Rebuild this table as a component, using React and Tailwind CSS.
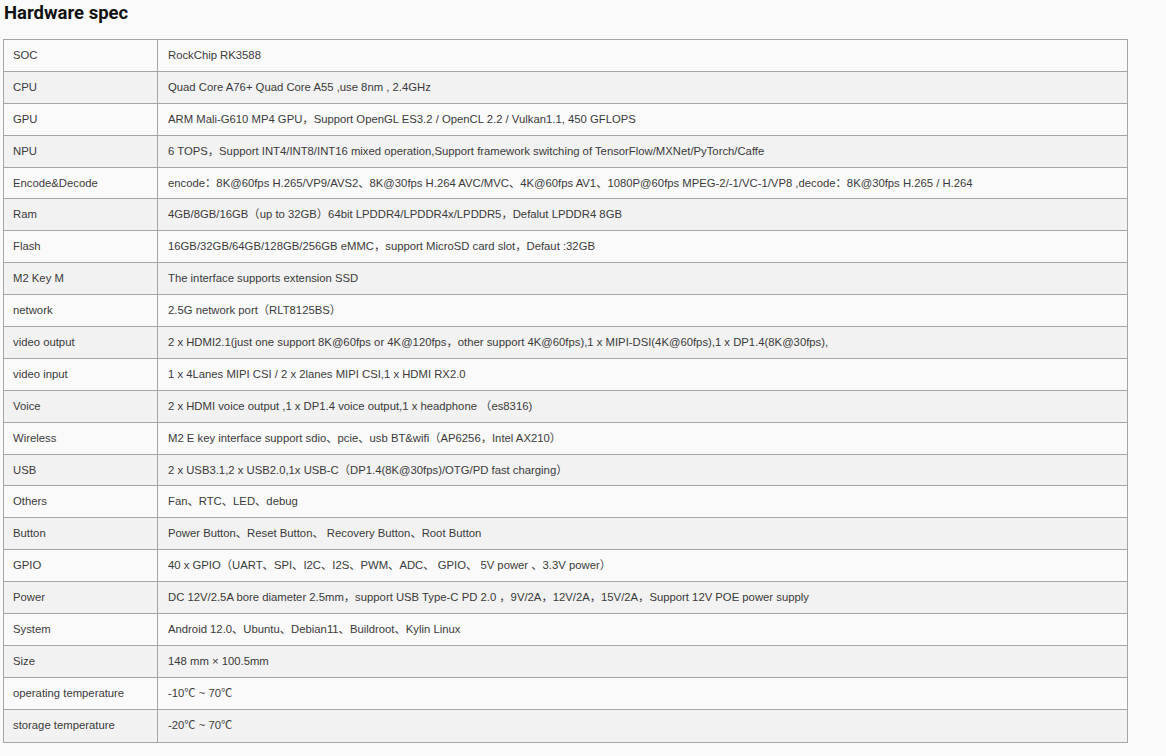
const rows = [
  ["SOC", "RockChip RK3588"],
  ["CPU", "Quad Core A76+ Quad Core A55 ,use 8nm , 2.4GHz"],
  ["GPU", "ARM Mali-G610 MP4 GPU，Support OpenGL ES3.2 / OpenCL 2.2 / Vulkan1.1, 450 GFLOPS"],
  ["NPU", "6 TOPS，Support INT4/INT8/INT16 mixed operation,Support framework switching of TensorFlow/MXNet/PyTorch/Caffe"],
  ["Encode&Decode", "encode：8K@60fps H.265/VP9/AVS2、8K@30fps H.264 AVC/MVC、4K@60fps AV1、1080P@60fps MPEG-2/-1/VC-1/VP8 ,decode：8K@30fps H.265 / H.264"],
  ["Ram", "4GB/8GB/16GB（up to 32GB）64bit LPDDR4/LPDDR4x/LPDDR5，Defalut LPDDR4 8GB"],
  ["Flash", "16GB/32GB/64GB/128GB/256GB eMMC，support MicroSD card slot，Defaut :32GB"],
  ["M2 Key M", "The interface supports extension SSD"],
  ["network", "2.5G network port（RLT8125BS）"],
  ["video output", "2 x HDMI2.1(just one support 8K@60fps or 4K@120fps，other support 4K@60fps),1 x MIPI-DSI(4K@60fps),1 x DP1.4(8K@30fps),"],
  ["video input", "1 x 4Lanes MIPI CSI / 2 x 2lanes MIPI CSI,1 x HDMI RX2.0"],
  ["Voice", "2 x HDMI voice output ,1 x DP1.4 voice output,1 x headphone （es8316)"],
  ["Wireless", "M2 E key interface support sdio、pcie、usb BT&wifi（AP6256，Intel AX210）"],
  ["USB", "2 x USB3.1,2 x USB2.0,1x USB-C（DP1.4(8K@30fps)/OTG/PD fast charging）"],
  ["Others", "Fan、RTC、LED、debug"],
  ["Button", "Power Button、Reset Button、 Recovery Button、Root Button"],
  ["GPIO", "40 x GPIO（UART、SPI、I2C、I2S、PWM、ADC、 GPIO、 5V power 、3.3V power）"],
  ["Power", "DC 12V/2.5A bore diameter 2.5mm，support USB Type-C PD 2.0 ，9V/2A，12V/2A，15V/2A，Support 12V POE power supply"],
  ["System", "Android 12.0、Ubuntu、Debian11、Buildroot、Kylin Linux"],
  ["Size", "148 mm × 100.5mm"],
  ["operating temperature", "-10℃ ~ 70℃"],
  ["storage temperature", "-20℃ ~ 70℃"],
];

export default function App() {
  return (
    <div className="min-h-[756px] w-[1166px] bg-[#fafafa] text-[#3a3a3a]">
      <h2 className="pl-[4px] pt-[1px] h-[39px] text-[18.5px] leading-[24px] font-bold text-[#111] font-['Roboto',sans-serif]">
        Hardware spec
      </h2>
      <div className="ml-[3px] w-[1125px] border border-[#a4a7aa] font-['Liberation_Sans','Noto_Sans_CJK_SC',sans-serif] text-[11.3px]">
        {rows.map(([k, v], i) => (
          <div
            key={k}
            className={
              "flex h-[31.9px] items-center " +
              (i < rows.length - 1 ? "border-b border-[#a4a7aa] " : "") +
              (i % 2 === 1 ? "bg-[#f2f2f2]" : "bg-[#fafafa]")
            }
          >
            <div className="w-[154px] h-full flex items-center pl-[9px] border-r border-[#a4a7aa] whitespace-nowrap">
              {k}
            </div>
            <div className="flex-1 pl-[10px] whitespace-nowrap">{v}</div>
          </div>
        ))}
      </div>
    </div>
  );
}
